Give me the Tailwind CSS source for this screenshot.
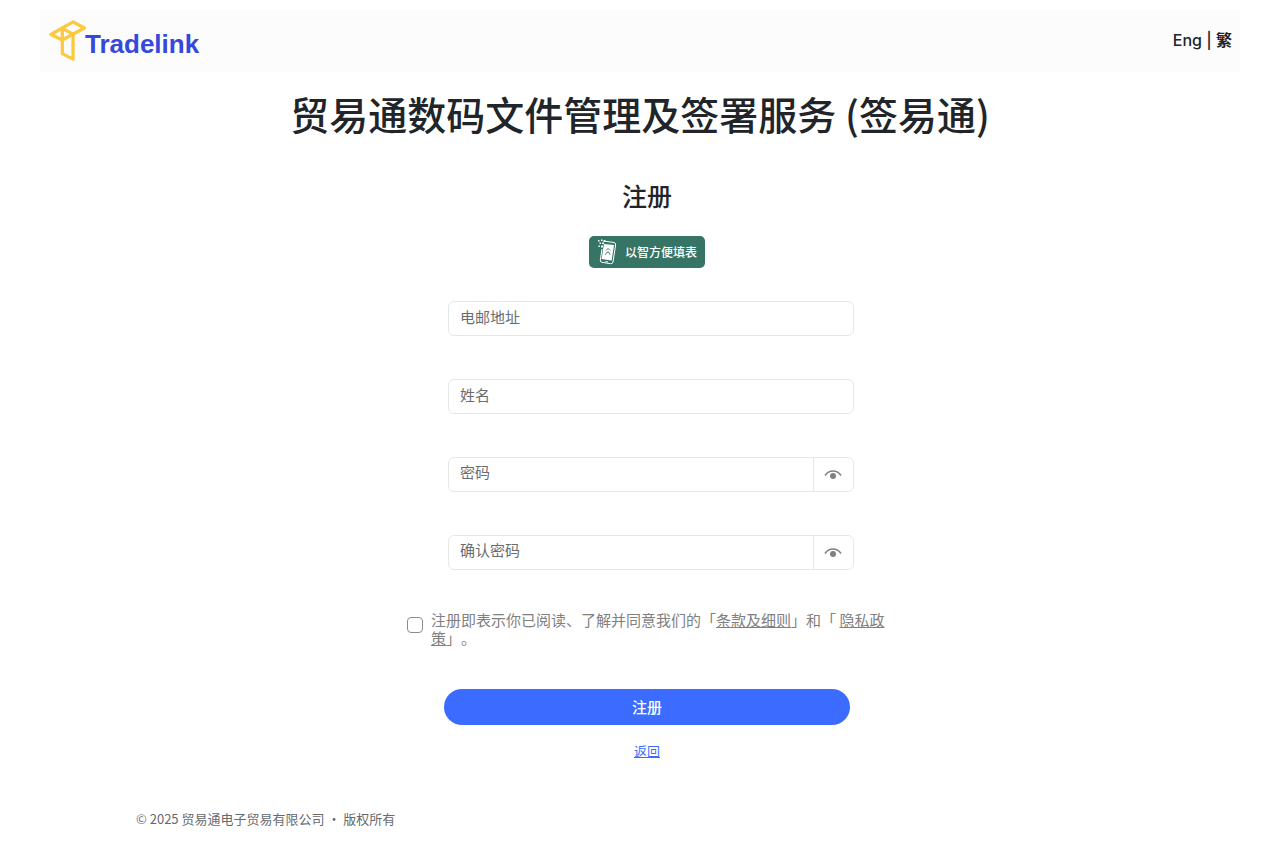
<!DOCTYPE html>
<html lang="zh-CN">
<head>
    <meta charset="UTF-8">
    <meta name="viewport" content="width=device-width, initial-scale=1.0">
    <title>注册 - 贸易通</title>
    <script src="https://cdn.jsdelivr.net/npm/@tailwindcss/browser@4"></script>
</head>
<body class="bg-white px-10 pt-[10px] font-['Noto_Sans_CJK_SC',sans-serif] text-[#212529] [text-spacing-trim:space-all]">
    <header class="flex h-[62px] items-center justify-between bg-[#fcfcfc] pl-[9px] pr-2">
        <a href="#" class="flex items-center pb-[2px] font-['Liberation_Sans',sans-serif] text-[26px] font-bold text-[#3648dc]">
            <svg class="h-[42px] w-[37px]" viewBox="36 44 114 126" fill="none" stroke="#fdc83c" stroke-width="10" stroke-linejoin="round">
                <path d="M42 90 L110 51 L145 70 L77 107 Z" />
                <path d="M77 71 L110 89 V166 L77 149 V71" />
            </svg>
            <span class="-ml-px pt-2">Tradelink</span>
        </a>
        <nav class="pb-[2px] font-['Inter','Noto_Sans_CJK_SC',sans-serif] text-base font-medium">
            <a href="#">Eng</a> | <a href="#" class="font-bold">繁</a>
        </nav>
    </header>

    <main>
        <h1 class="mt-[13px] text-center text-[39px] leading-[56px] font-medium">贸易通数码文件管理及签署服务 (签易通)</h1>

        <form class="mx-auto mt-[34px] w-full max-w-[494px] pl-[14px]">
            <h2 class="text-center text-[25px] leading-[40px] font-medium">注册</h2>

            <button type="button" class="mx-auto mt-[21px] flex h-8 items-center gap-2 rounded-[5px] bg-[#367466] px-2 text-[12px] font-medium text-white">
                <svg class="h-7 w-5" viewBox="0 0 20 28" fill="none">
                    <path d="M6 3 L17 4.500 Q19 5 18.600 7 L16 24 Q15.500 26 13.500 25.700 L5 24.300 Q3 24 3.300 22 L5 11" stroke="#fff" />
                    <path d="M7 6 L17 7 L14.600 22.500 L4.600 21 L6 12 Z" fill="#fff" />
                    <path d="M8.500 23.600 L11 24" stroke="#fff" />
                    <path d="M8.500 17 Q9 14 11 14 Q13 14 13 17 M9 12.500 Q11 9 13.500 12.500 M11 13.500 V15" stroke="#367466" stroke-width=".8" />
                    <path d="M1 2h1.500v1.500H1zM4 1.500h1.500V3H4zM2.500 4.500H4V6H2.500zM5 4.500h2V6H5zM1.500 7.500H3V9H1.500zM4 7.500h2v2H4zM7 2h1.500v1.500H7z" fill="#fff" />
                </svg>
                以智方便填表
            </button>

            <div class="mt-[33px] mr-[33px] ml-[41px] flex flex-col gap-[43px] text-[15px]">
                <input type="email" aria-label="电邮地址" placeholder="电邮地址" class="h-[35px] w-full rounded-md border border-[#e5e7ea] px-[11px] pb-1 placeholder:text-[#6a6d70]">
                <input type="text" aria-label="姓名" placeholder="姓名" class="h-[35px] w-full rounded-md border border-[#e5e7ea] px-[11px] pb-1 placeholder:text-[#6a6d70]">
                <div class="flex h-[35px] rounded-md border border-[#e5e7ea]">
                    <input type="password" aria-label="密码" placeholder="密码" class="min-w-0 flex-1 px-[11px] pb-1 placeholder:text-[#6a6d70]">
                    <button type="button" aria-label="显示密码" class="flex w-10 items-center justify-center border-l border-[#e5e7ea] pr-[2px]">
                        <svg class="h-3 w-[18px]" viewBox="0 0 18 12" fill="none">
                            <path d="M1 6.500 Q4 2 9 2 Q14 2 17 6.500" stroke="#808080" stroke-width="1.600" />
                            <circle cx="9" cy="7" r="3" fill="#808080" />
                        </svg>
                    </button>
                </div>
                <div class="flex h-[35px] rounded-md border border-[#e5e7ea]">
                    <input type="password" aria-label="确认密码" placeholder="确认密码" class="min-w-0 flex-1 px-[11px] pb-1 placeholder:text-[#6a6d70]">
                    <button type="button" aria-label="显示确认密码" class="flex w-10 items-center justify-center border-l border-[#e5e7ea] pr-[2px]">
                        <svg class="h-3 w-[18px]" viewBox="0 0 18 12" fill="none">
                            <path d="M1 6.500 Q4 2 9 2 Q14 2 17 6.500" stroke="#808080" stroke-width="1.600" />
                            <circle cx="9" cy="7" r="3" fill="#808080" />
                        </svg>
                    </button>
                </div>
            </div>

            <div class="mt-[41px] flex items-start gap-2 text-[15px] leading-[18px] text-[#808080]">
                <input id="agree" type="checkbox" class="mt-[6px] size-4 shrink-0 appearance-none rounded-[4px] border border-[#8c8c8c] bg-white checked:bg-[#3b6cff]">
                <label for="agree">注册即表示你已阅读、了解并同意我们的「<a href="#" class="underline">条款及细则</a>」和「 <a href="#" class="underline">隐私政策</a>」。</label>
            </div>

            <div class="mt-[42px] px-[37px]">
                <button type="submit" class="h-9 w-full rounded-full bg-[#3b6cff] text-[15px] font-medium text-white">注册</button>
            </div>
            <p class="mt-4 text-center text-[13px] leading-5">
                <a href="#" class="text-[#3b6cff] underline">返回</a>
            </p>
        </form>
    </main>

    <footer class="mt-12 px-24 text-[13px] leading-5 text-[#666a6d]">© 2025 贸易通电子贸易有限公司 ・ 版权所有</footer>
</body>
</html>
